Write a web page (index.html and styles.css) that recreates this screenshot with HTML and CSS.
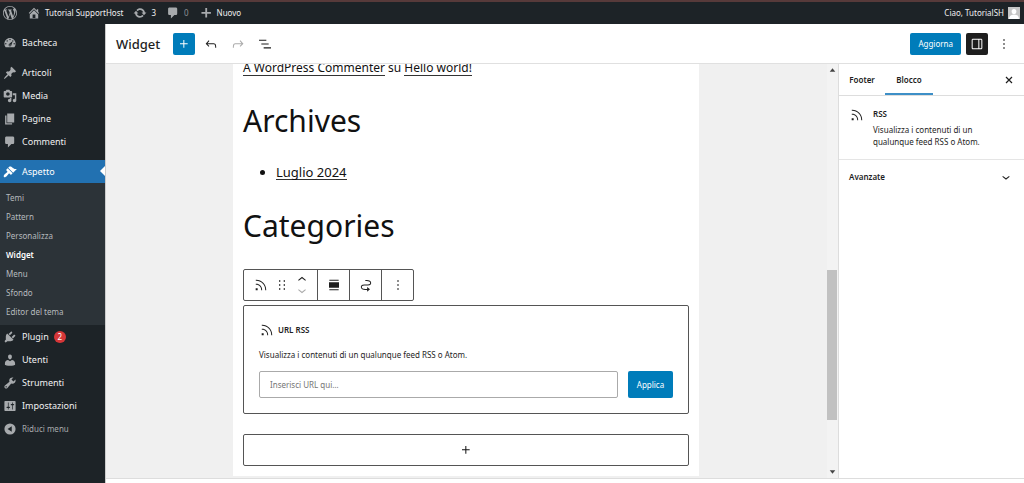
FILE: index.html
```html
<!DOCTYPE html>
<html lang="it">
<head>
<meta charset="utf-8">
<title>Widget</title>
<link rel="stylesheet" href="styles.css">
</head>
<body>
<svg class="sprite" aria-hidden="true">
  <symbol id="rss" viewBox="0 0 24 24"><path d="M5 10.2h-.8v1.5H5c1.9 0 3.8.8 5.1 2.1 1.4 1.4 2.1 3.2 2.1 5.1v.8h1.5V19c0-2.3-.9-4.5-2.6-6.2-1.6-1.6-3.8-2.6-6.1-2.6zm10.4-1.6C12.6 5.8 8.9 4.2 5 4.2h-.8v1.5H5c3.5 0 6.9 1.4 9.4 3.9s3.9 5.8 3.9 9.4v.8h1.5V19c0-3.9-1.6-7.6-4.4-10.4zM4 20h3v-3H4v3z"/></symbol>
  <symbol id="comment" viewBox="0 0 20 20"><path d="M5 2h9c1.1 0 2 .9 2 2v7c0 1.1-.9 2-2 2h-2l-5 5v-5H5c-1.1 0-2-.9-2-2V4c0-1.1.9-2 2-2z"/></symbol>
  <symbol id="plus" viewBox="0 0 24 24"><path d="M11 12.5V17.5H12.5V12.5H17.5V11H12.5V6H11V11H6V12.5H11Z"/></symbol>
  <symbol id="more" viewBox="0 0 24 24"><path d="M13 19h-2v-2h2v2zm0-6h-2v-2h2v2zm0-6h-2V5h2v2z"/></symbol>
  <symbol id="down" viewBox="0 0 24 24"><path d="M17.5 11.6L12 16l-5.5-4.4.9-1.2L12 14l4.5-3.6 1 1.2z"/></symbol>
</svg>
<div class="app">
  <header class="adminbar">
    <a href="#" class="bar-link" aria-label="WordPress"><svg class="icon" viewBox="0 0 20 20"><path d="M20 10c0-5.51-4.49-10-10-10C4.48 0 0 4.49 0 10c0 5.52 4.48 10 10 10 5.51 0 10-4.48 10-10zM7.78 15.37L4.37 6.22c.55-.02 1.17-.08 1.17-.08.5-.06.44-1.13-.06-1.11 0 0-1.45.11-2.37.11-.18 0-.37 0-.58-.01C4.12 2.69 6.87 1.11 10 1.11c2.33 0 4.45.87 6.05 2.34-.68-.11-1.65.39-1.65 1.58 0 .74.45 1.36.9 2.1.35.61.55 1.36.55 2.46 0 1.49-1.4 5-1.4 5l-3.03-8.37c.54-.02.82-.17.82-.17.5-.05.44-1.25-.06-1.22 0 0-1.44.12-2.38.12-.87 0-2.33-.12-2.33-.12-.5-.03-.56 1.2-.06 1.22l.92.08 1.26 3.41zM17.41 10c.24-.64.74-1.87.43-4.25.7 1.29 1.05 2.71 1.05 4.25 0 3.29-1.73 6.24-4.4 7.78.97-2.59 1.94-5.2 2.92-7.78zM6.1 18.09C3.12 16.65 1.11 13.53 1.11 10c0-1.3.23-2.48.72-3.59C3.25 10.3 4.67 14.2 6.1 18.09zm4.03-6.63l2.58 6.98c-.86.29-1.76.45-2.71.45-.79 0-1.57-.11-2.29-.33.81-2.38 1.62-4.74 2.42-7.1z"/></svg></a>
    <a href="#" class="bar-link"><svg class="icon" viewBox="0 0 20 20"><path d="M16 8.5l1.53 1.53-1.06 1.06L10 4.6l-6.47 6.49-1.06-1.06L10 2.5l4 4v-2h2v4zm-6-2.46l6 5.99V18H4v-5.97zM12 17v-5H8v5h4z"/></svg>Tutorial SupportHost</a>
    <a href="#" class="bar-link"><svg class="icon" viewBox="0 0 20 20"><path d="M10.2 3.28c3.53 0 6.43 2.61 6.92 6h2.08l-3.5 4-3.5-4h2.32c-.45-1.97-2.21-3.45-4.32-3.45-1.45 0-2.73.71-3.54 1.78L4.95 5.66C6.23 4.2 8.11 3.28 10.2 3.28zm-.4 13.44c-3.52 0-6.43-2.61-6.92-6H.8l3.5-4c1.17 1.33 2.33 2.67 3.5 4H5.48c.45 1.97 2.21 3.45 4.32 3.45 1.45 0 2.73-.71 3.54-1.78l1.71 1.95c-1.28 1.46-3.15 2.38-5.25 2.38z"/></svg>3</a>
    <a href="#" class="bar-link bar-muted"><svg class="icon"><use href="#comment"/></svg>0</a>
    <a href="#" class="bar-link"><svg class="icon" viewBox="0 0 20 20"><path d="M17 8.500v2.600h-5.400v5.400H9v-5.400H3.500V8.500H9V3h2.600v5.500z"/></svg>Nuovo</a>
    <a href="#" class="bar-link bar-user">Ciao, TutorialSH <svg class="avatar" viewBox="0 0 12 12"><path fill="#c6c6c6" d="M0 0h12v12H0z"/><path fill="#fff" d="M6 2c1.600 0 2.400 1.200 2.400 2.600S7.400 7.300 6 7.300 3.600 6 3.600 4.600 4.400 2 6 2zM1 12c.2-2.600 1.500-4 3.500-4.300h3C9.500 8 10.800 9.400 11 12z"/></svg></a>
  </header>
  <div class="body">
    <nav class="menu" aria-label="Menu principale">
      <a href="#" class="item"><svg class="icon" viewBox="0 0 20 20"><path d="M3.760 16h12.480c1.100-1.370 1.760-3.110 1.760-5 0-4.420-3.580-8-8-8s-8 3.580-8 8c0 1.890.660 3.630 1.760 5zM10 4c.55 0 1 .45 1 1s-.45 1-1 1-1-.45-1-1 .45-1 1-1zM6 6c.55 0 1 .45 1 1s-.45 1-1 1-1-.45-1-1 .45-1 1-1zm8 0c.55 0 1 .45 1 1s-.45 1-1 1-1-.45-1-1 .45-1 1-1zm-5.370 5.550L14 7l-2 6c0 1.100-.9 2-2 2s-2-.9-2-2c0-.57.24-1.080.63-1.450zM4 10c.55 0 1 .45 1 1s-.45 1-1 1-1-.45-1-1 .45-1 1-1zm12 0c.55 0 1 .45 1 1s-.45 1-1 1-1-.45-1-1 .45-1 1-1zm-5 3c0-.55-.45-1-1-1s-1 .45-1 1 .45 1 1 1 1-.45 1-1z"/></svg>Bacheca</a>
      <a href="#" class="item after-gap"><svg class="icon" viewBox="0 0 20 20"><path d="M10.440 3.020l1.820-1.820 6.360 6.350-1.830 1.820c-1.050-.68-2.480-.57-3.410.36l-.75.75c-.92.93-1.040 2.350-.35 3.410l-1.830 1.820-2.410-2.410-2.800 2.790c-.42.42-3.380 2.710-3.800 2.290s1.860-3.390 2.280-3.810l2.790-2.790L4.100 9.360l1.830-1.820c1.050.69 2.480.57 3.400-.36l.75-.75c.93-.92 1.050-2.350.36-3.410z"/></svg>Articoli</a>
      <a href="#" class="item"><svg class="icon" viewBox="0 0 20 20"><path d="M13 11V4c0-.55-.45-1-1-1h-1.670L9 1H5L3.670 3H2c-.55 0-1 .45-1 1v7c0 .55.45 1 1 1h10c.55 0 1-.45 1-1zM7 4.500c1.380 0 2.500 1.120 2.500 2.500S8.380 9.500 7 9.500 4.500 8.380 4.500 7 5.620 4.500 7 4.500zM14 6h5v10.500c0 1.380-1.120 2.500-2.500 2.500S14 17.880 14 16.500s1.120-2.500 2.500-2.500c.17 0 .34.02.5.05V9h-3V6zm-4 8.050V13h2v3.500c0 1.380-1.120 2.500-2.500 2.500S7 17.880 7 16.500 8.120 14 9.500 14c.17 0 .34.02.5.05z"/></svg>Media</a>
      <a href="#" class="item"><svg class="icon" viewBox="0 0 20 20"><path d="M6 15V2h10v13H6zm-1 1h8v2H3V5h2v11z"/></svg>Pagine</a>
      <a href="#" class="item"><svg class="icon"><use href="#comment"/></svg>Commenti</a>
      <a href="#" class="item current"><svg class="icon" viewBox="0 0 20 20"><path d="M14.480 11.060L7.410 3.990l1.500-1.500c.5-.56 2.300-.47 3.510.32 1.210.8 1.430 1.280 2.910 2.100 1.180.64 2.450 1.260 4.450.85zm-.71.71L6.700 4.700 4.930 6.470c-.39.39-.39 1.020 0 1.410l1.060 1.060c.39.39.39 1.030 0 1.420-.6.6-1.430 1.110-2.210 1.690-.35.26-.7.53-1.010.84C1.430 14.230.4 16.080 1.400 17.070c.99 1 2.840-.03 4.180-1.360.31-.31.58-.66.85-1.020.57-.78 1.080-1.610 1.690-2.210.39-.39 1.020-.39 1.410 0l1.060 1.060c.39.39 1.020.39 1.410 0z"/></svg>Aspetto</a>
      <div class="submenu">
        <a href="#">Temi</a>
        <a href="#">Pattern</a>
        <a href="#">Personalizza</a>
        <a href="#" class="selected">Widget</a>
        <a href="#">Menu</a>
        <a href="#">Sfondo</a>
        <a href="#">Editor del tema</a>
      </div>
      <a href="#" class="item"><svg class="icon" viewBox="0 0 20 20"><path d="M13.110 4.360L9.870 7.600 8 5.730l3.240-3.240c.35-.34 1.050-.2 1.560.32.52.51.66 1.210.31 1.550zm-8 1.770l.91-1.120 9.010 9.010-1.190.84c-.71.71-2.630 1.160-3.820 1.160H6.140L4.900 17.260c-.59.59-1.540.59-2.120 0-.59-.58-.59-1.530 0-2.120l1.240-1.240v-3.880c0-1.130.4-3.190 1.090-3.890zm7.260 3.970l3.240-3.240c.34-.35 1.040-.21 1.550.31.52.51.66 1.210.31 1.550l-3.240 3.250z"/></svg>Plugin <span class="count">2</span></a>
      <a href="#" class="item"><svg class="icon" viewBox="0 0 20 20"><path d="M10 9.250c-2.270 0-2.730-3.440-2.730-3.440C7 4.020 7.820 2 9.970 2c2.160 0 2.980 2.020 2.710 3.810 0 0-.41 3.440-2.680 3.440zm0 2.570L12.720 10c2.390 0 4.520 2.330 4.520 4.530v2.490s-3.650 1.130-7.240 1.130c-3.650 0-7.240-1.130-7.240-1.130v-2.490c0-2.250 1.940-4.480 4.470-4.480z"/></svg>Utenti</a>
      <a href="#" class="item"><svg class="icon" viewBox="0 0 20 20"><path d="M16.680 9.770c-1.340 1.340-3.300 1.670-4.950.99l-5.410 6.520c-.99.99-2.590.99-3.580 0s-.99-2.590 0-3.570l6.520-5.420c-.68-1.650-.35-3.610.99-4.950 1.280-1.280 3.120-1.620 4.720-1.060l-2.890 2.890 2.820 2.820 2.860-2.870c.53 1.580.18 3.390-1.080 4.650zM3.810 16.210c.4.39 1.040.39 1.430 0 .4-.4.4-1.040 0-1.430-.39-.4-1.030-.4-1.430 0-.39.39-.39 1.030 0 1.430z"/></svg>Strumenti</a>
      <a href="#" class="item"><svg class="icon" viewBox="0 0 20 20"><path d="M18 16V4c0-.55-.45-1-1-1H3c-.55 0-1 .45-1 1v12c0 .55.45 1 1 1h14c.55 0 1-.45 1-1zM8 11h1c.55 0 1 .45 1 1s-.45 1-1 1H8v1.500c0 .28-.22.5-.5.5s-.5-.22-.5-.5V13H6c-.55 0-1-.45-1-1s.45-1 1-1h1V5.500c0-.28.22-.5.5-.5s.5.22.5.5V11zm5-2h-1c-.55 0-1-.45-1-1s.45-1 1-1h1V5.500c0-.28.22-.5.5-.5s.5.22.5.5V7h1c.55 0 1 .45 1 1s-.45 1-1 1h-1v5.500c0 .28-.22.5-.5.5s-.5-.22-.5-.5V9z"/></svg>Impostazioni</a>
      <button type="button" class="item collapse"><svg class="icon" viewBox="0 0 20 20"><path fill-rule="evenodd" d="M10 2a8 8 0 1 0 0 16 8 8 0 0 0 0-16zm2.500 12L6.500 10l6-4z"/></svg>Riduci menu</button>
    </nav>
    <div class="editor">
      <div class="topbar">
        <h1>Widget</h1>
        <button type="button" class="tool primary" aria-label="Aggiungi blocco"><svg class="glyph"><use href="#plus"/></svg></button>
        <button type="button" class="tool" aria-label="Annulla"><svg class="glyph" viewBox="0 0 24 24"><path d="M18.300 11.700c-.6-.6-1.400-.9-2.300-.9H6.700l2.900-3.300-1.100-1-4.500 5L8.500 16l1-1-2.700-2.700H16c.5 0 .9.2 1.300.5 1 1 1 3.400 1 4.500v.3h1.500v-.2c0-1.500 0-4.300-1.500-5.700z"/></svg></button>
        <button type="button" class="tool faded" aria-label="Ripeti"><svg class="glyph" viewBox="0 0 24 24"><path d="M15.600 6.500l-1.100 1 2.900 3.300H8c-.9 0-1.700.3-2.300.9-1.400 1.500-1.400 4.200-1.400 5.600v.2h1.500v-.3c0-1.100 0-3.500 1-4.500.3-.3.700-.5 1.300-.5h9.200L14.500 15l1.100 1.100 4.600-4.600-4.600-5z"/></svg></button>
        <button type="button" class="tool" aria-label="Vista elenco"><svg class="glyph" viewBox="0 0 24 24"><path d="M3 5.500h11v1.700H3V5.500Zm3.500 5.700h11v1.700h-11v-1.700ZM21 17H10v1.700h11V17Z"/></svg></button>
        <button type="button" class="save">Aggiorna</button>
        <button type="button" class="tool dark" aria-label="Impostazioni"><svg class="glyph" viewBox="0 0 24 24"><path d="M18 4H6c-1.100 0-2 .9-2 2v12c0 1.100.9 2 2 2h12c1.100 0 2-.9 2-2V6c0-1.100-.9-2-2-2zm-4 14.500H6c-.3 0-.5-.2-.5-.5V6c0-.3.2-.5.5-.5h8v13zm4.500-.5c0 .3-.2.5-.5.5h-2.500v-13H18c.3 0 .5.2.5.5v12z"/></svg></button>
        <button type="button" class="tool" aria-label="Opzioni"><svg class="glyph"><use href="#more"/></svg></button>
      </div>
      <div class="workspace">
        <main class="canvas">
          <div class="document">
            <p class="comment-line"><a href="#">A WordPress Commenter</a> su <a href="#">Hello world!</a></p>
            <h2>Archives</h2>
            <ul><li><a href="#">Luglio 2024</a></li></ul>
            <h2>Categories</h2>
            <div class="block-toolbar">
              <div class="group wide">
                <button type="button" aria-label="RSS"><svg class="glyph"><use href="#rss"/></svg></button>
                <button type="button" aria-label="Trascina"><svg class="glyph" viewBox="0 0 24 24"><path d="M7.500 7h2V5h-2v2zm0 6h2v-2h-2v2zm0 6h2v-2h-2v2zm7-14v2h2V5h-2zm0 8h2v-2h-2v2zm0 6h2v-2h-2v2z"/></svg></button>
                <span class="movers">
                  <button type="button" aria-label="Sposta su"><svg viewBox="5 7 14 8"><path d="M6.500 12.400L12 8l5.500 4.400-.9 1.200L12 10l-4.500 3.600-1-1.200z"/></svg></button>
                  <button type="button" class="faded" aria-label="Sposta giù"><svg viewBox="5 9 14 8"><path d="M17.500 11.600L12 16l-5.500-4.400.9-1.200L12 14l4.500-3.600 1 1.200z"/></svg></button>
                </span>
              </div>
              <div class="group"><button type="button" aria-label="Allinea"><svg class="glyph" viewBox="0 0 24 24"><path d="M5 4h14v1.500H5zM5 18.500h14V20H5zM4.500 8h15v8h-15z"/></svg></button></div>
              <div class="group"><button type="button" aria-label="Sposta nell'area widget"><svg class="glyph" viewBox="0 0 24 24"><path d="M19.750 9c0-1.257-.565-2.197-1.390-2.858-.797-.64-1.827-1.017-2.815-1.247-1.802-.42-3.703-.403-4.383-.396L11 4.500V6l.177-.001c.696-.006 2.416-.02 4.028.356.887.207 1.670.518 2.216.957.52.416.829.945.829 1.688 0 .592-.167.966-.407 1.230-.255.281-.656.508-1.236.674-1.190.34-2.820.346-4.607.346h-.077c-1.692 0-3.527 0-4.942.404-.732.209-1.424.545-1.935 1.108-.526.579-.796 1.330-.796 2.238 0 1.257.565 2.197 1.390 2.858.797.64 1.827 1.017 2.815 1.247 1.802.42 3.703.403 4.383.396L13 19.500h.714V22L18 18.500 13.714 15v3H13l-.177.001c-.696.006-2.416.02-4.028-.356-.887-.207-1.670-.518-2.216-.957-.52-.416-.829-.945-.829-1.688 0-.592.167-.966.407-1.230.255-.281.656-.508 1.237-.674 1.189-.34 2.819-.346 4.606-.346h.077c1.692 0 3.527 0 4.941-.404.732-.209 1.425-.545 1.936-1.108.526-.579.796-1.330.796-2.238z"/></svg></button></div>
              <div class="group"><button type="button" aria-label="Opzioni blocco"><svg class="glyph"><use href="#more"/></svg></button></div>
            </div>
            <form class="placeholder">
              <label class="placeholder-title" for="feed"><svg class="glyph"><use href="#rss"/></svg>URL RSS</label>
              <p>Visualizza i contenuti di un qualunque feed RSS o Atom.</p>
              <div class="row">
                <input id="feed" type="text" placeholder="Inserisci URL qui…">
                <button type="button" class="apply">Applica</button>
              </div>
            </form>
            <button type="button" class="appender" aria-label="Aggiungi blocco"><svg class="glyph"><use href="#plus"/></svg></button>
          </div>
          <div class="scrollbar" aria-hidden="true">
            <svg class="arrow" viewBox="0 0 10 10"><path d="M2.500 6.500h5L5 3.500z"/></svg>
            <div class="track"><div class="thumb"></div></div>
            <svg class="arrow" viewBox="0 0 10 10"><path d="M2.500 3.500h5L5 6.500z"/></svg>
          </div>
        </main>
        <aside class="panel">
          <div class="tabs">
            <button type="button" class="tab">Footer</button>
            <button type="button" class="tab active">Blocco</button>
            <button type="button" class="close" aria-label="Chiudi"><svg viewBox="0 0 10 10"><path d="M2 2l6 6M8 2L2 8"/></svg></button>
          </div>
          <section class="card">
            <svg class="glyph"><use href="#rss"/></svg>
            <div>
              <h3>RSS</h3>
              <p>Visualizza i contenuti di un qualunque feed RSS o Atom.</p>
            </div>
          </section>
          <button type="button" class="advanced">Avanzate<svg class="glyph"><use href="#down"/></svg></button>
        </aside>
      </div>
    </div>
  </div>
</div>
</body>
</html>
```
FILE: styles.css
```css
* { box-sizing: border-box; }
body { margin: 0; font: 8px/14px "Noto Sans", "Open Sans", sans-serif; color: #1e1e1e; background: #fff; }
h1, h2, h3, p, ul { margin: 0; font-weight: 400; }
a { color: inherit; text-decoration: none; }
button { margin: 0; padding: 0; border: 0; background: none; color: inherit; font: inherit; display: flex; align-items: center; justify-content: center; }
svg { display: block; flex: none; fill: currentColor; }
.sprite { position: absolute; width: 0; height: 0; }
.icon { width: 14px; height: 14px; color: #a7aaad; }
.glyph { width: 16px; height: 16px; }
.faded { color: #aaa; }

.app { height: 100vh; display: flex; flex-direction: column; }
.adminbar { flex: none; height: 24px; border-top: 2px solid #573a3a; background: #1d2327; color: #f0f0f1; display: flex; align-items: center; gap: 10px; padding: 0 4px 0 3px; }
.bar-link { display: flex; align-items: center; gap: 4px; }
.bar-muted { color: #8c8f94; }
.bar-user { margin-left: auto; }
.avatar { width: 12px; height: 12px; }
.body { flex: 1; min-height: 0; display: flex; }

.menu { flex: none; width: 105px; background: #1d2327; color: #f0f0f1; padding-top: 7px; font-size: 9px; }
.item { width: 100%; height: 23px; display: flex; align-items: center; justify-content: flex-start; gap: 5px; padding-left: 3px; position: relative; }
.after-gap { margin-top: 7px; }
.current { margin-top: 7px; background: #2271b1; color: #fff; }
.current .icon { color: #fff; }
.current::after { content: ""; position: absolute; right: 0; top: 6px; border: 5px solid transparent; border-left: 0; border-right-color: #fff; }
.submenu { background: #2c3338; color: #b6babe; padding: 5px 0 4px 6px; font-size: 8px; }
.submenu a { display: block; line-height: 19px; }
.submenu .selected { color: #fff; font-weight: 600; }
.count { width: 12px; height: 12px; border-radius: 6px; background: #d63638; color: #fff; font-size: 8px; line-height: 12px; text-align: center; }
.collapse { color: #a7aaad; font-size: 8px; }

.editor { flex: 1; min-width: 0; display: flex; flex-direction: column; border-left: 1px solid #ccc; }
.topbar { flex: none; height: 40px; border-bottom: 1px solid #e0e0e0; display: flex; align-items: center; gap: 5px; padding: 0 9px 0 10px; }
.topbar h1 { font-size: 13px; line-height: 20px; font-weight: 500; margin-right: 8px; }
.tool { width: 22px; height: 22px; border-radius: 2px; }
.primary, .save, .apply { background: #007cba; color: #fff; border-radius: 2px; }
.dark { background: #1e1e1e; color: #fff; }
.save { margin-left: auto; height: 22px; padding: 0 8px; }

.workspace { flex: 1; min-height: 0; display: flex; border-bottom: 1px solid #ddd; margin-bottom: 4px; }
.canvas { flex: 1; min-width: 0; background: #f0f0f0; display: flex; justify-content: flex-end; padding-left: 127px; overflow: hidden; }
.document { flex: 1; min-width: 0; background: #fff; margin: 0 128px 2px 0; padding: 0 10px 10px; display: flex; flex-direction: column; justify-content: flex-end; overflow: hidden; color: #111; font-size: 13px; line-height: 20px; }
.document > * { flex: none; }
.document p a, .document li a { border-bottom: 1px solid #333; line-height: 14px; display: inline-block; }
.comment-line { margin-bottom: 23px; font-size: 12px; }
.document h2 { font-size: 30px; line-height: 40px; }
.document ul { margin: 21px 0 24px; padding-left: 33px; }
.document .block-toolbar { margin-top: 23px; align-self: flex-start; height: 32px; display: flex; border: 1px solid #555; border-radius: 2px; color: #1e1e1e; }
.group { width: 32px; display: flex; align-items: center; justify-content: center; }
.group + .group { border-left: 1px solid #555; }
.wide { width: 73px; gap: 5px; }
.movers { display: flex; flex-direction: column; gap: 6px; width: 14px; align-items: center; }
.movers svg { width: 10px; height: 6px; }
.placeholder { margin-top: 4px; border: 1px solid #555; border-radius: 2px; padding: 14px 15px 15px; color: #1e1e1e; font-size: 8px; line-height: 14px; }
.placeholder-title { display: flex; align-items: center; gap: 3px; height: 20px; font-weight: 600; }
.placeholder p { margin: 8px 0 9px; }
.row { display: flex; gap: 10px; }
.row input { flex: 1; min-width: 0; height: 27px; border: 1px solid #aaa; border-radius: 2px; padding: 0 10px; font: inherit; color: inherit; }
.row input::placeholder { color: #757575; opacity: 1; }
.apply { width: 45px; height: 27px; }
.appender { margin-top: 20px; height: 32px; border: 1px solid #555; border-radius: 2px; }

.scrollbar { flex: none; width: 11px; background: #f3f3f3; display: flex; flex-direction: column; align-items: center; color: #444; }
.arrow { width: 11px; height: 12px; }
.track { flex: 1; width: 100%; display: flex; flex-direction: column; justify-content: flex-end; padding-bottom: 46px; }
.thumb { width: 10px; height: 150px; background: #c1c1c1; }

.panel { flex: none; width: 186px; border-left: 1px solid #ddd; background: #fff; }
.tabs { height: 32px; border-bottom: 1px solid #ddd; display: flex; }
.tab { width: 46px; font-weight: 600; }
.active { border-top: 2px solid transparent; border-bottom: 2px solid #3d8fc7; width: 48px; }
.close { margin-left: auto; width: 30px; }
.close svg { width: 10px; height: 10px; stroke: currentColor; stroke-width: 1.2; }
.card { display: flex; gap: 8px; padding: 11px 10px; border-bottom: 1px solid #e5e5e5; }
.card h3 { font-size: 8px; line-height: 14px; font-weight: 600; margin-bottom: 3px; }
.card p { line-height: 12px; }
.advanced { width: 100%; height: 34px; padding: 0 10px; justify-content: space-between; font-weight: 600; }
```
